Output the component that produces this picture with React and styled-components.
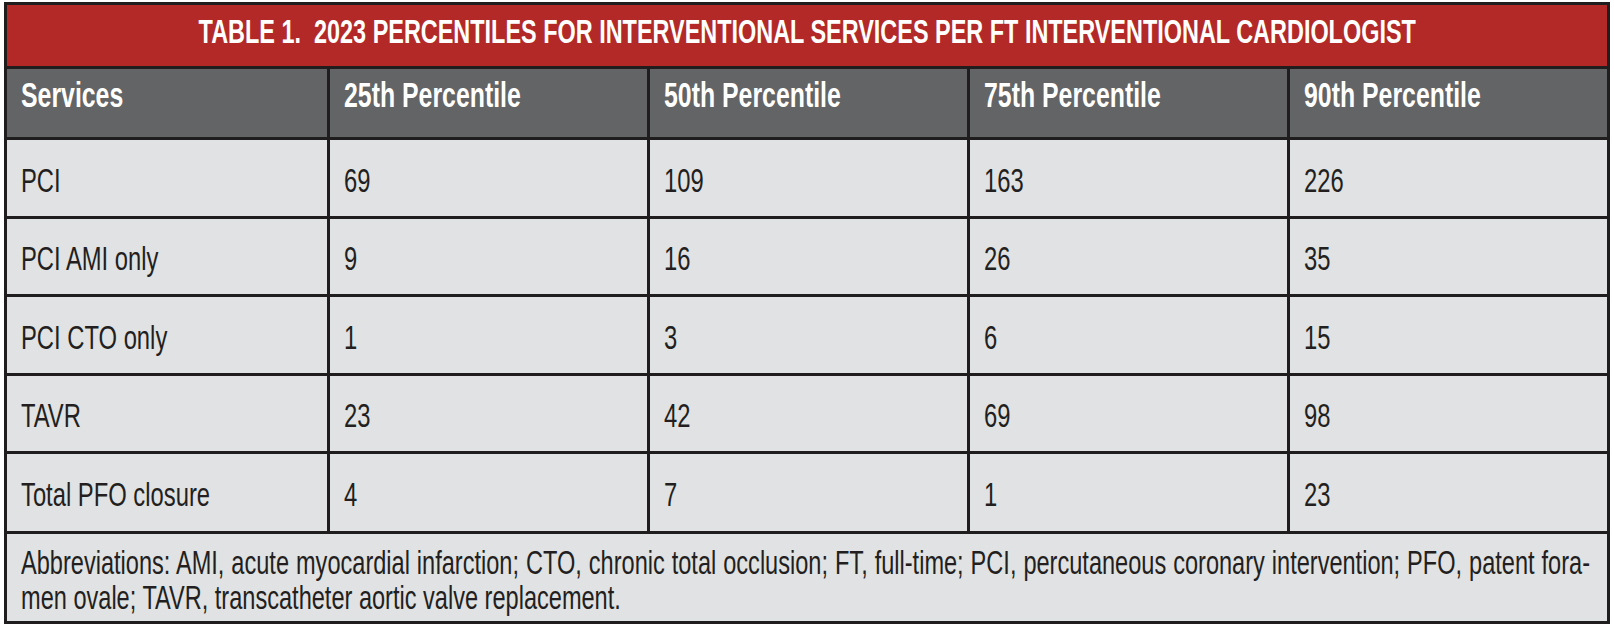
import React from "react";
import styled, { createGlobalStyle } from "styled-components";

const GlobalStyle = createGlobalStyle`
  html, body {
    margin: 0;
    padding: 0;
    background: #ffffff;
  }
  body {
    padding: 2px 4px 0 4px;
    font-family: "Liberation Sans", Arial, sans-serif;
  }
`;

const columns = [
  "Services",
  "25th Percentile",
  "50th Percentile",
  "75th Percentile",
  "90th Percentile",
];

const rows = [
  { h: 79, cells: ["PCI", "69", "109", "163", "226"] },
  { h: 78, cells: ["PCI AMI only", "9", "16", "26", "35"] },
  { h: 79, cells: ["PCI CTO only", "1", "3", "6", "15"] },
  { h: 78, cells: ["TAVR", "23", "42", "69", "98"] },
  { h: 80, cells: ["Total PFO closure", "4", "7", "1", "23"] },
];

// the reference uses a condensed grotesque; squeeze the regular face horizontally
const NARROW = 0.71;

function App() {
  return (
    <>
      <GlobalStyle />
      <Table>
        <Title>
          <Narrow $origin="center">
            TABLE 1.&nbsp; 2023 PERCENTILES FOR INTERVENTIONAL SERVICES PER FT INTERVENTIONAL CARDIOLOGIST
          </Narrow>
        </Title>
        <Grid>
          {columns.map((c, i) => (
            <HeadCell key={c} $first={i === 0}>
              <Narrow>{c}</Narrow>
            </HeadCell>
          ))}
          {rows.map((r) =>
            r.cells.map((v, i) => (
              <Cell key={r.cells[0] + i} $first={i === 0} $h={r.h}>
                <Narrow>{v}</Narrow>
              </Cell>
            ))
          )}
        </Grid>
        <Footer>
          <FooterText>
            <FirstLine>
              Abbreviations: AMI, acute myocardial infarction; CTO, chronic total occlusion; FT, full-time; PCI, percutaneous coronary intervention; PFO, patent fora-
            </FirstLine>
            <Line>men ovale; TAVR, transcatheter aortic valve replacement.</Line>
          </FooterText>
        </Footer>
      </Table>
    </>
  );
}

const Narrow = styled.span`
  display: inline-block;
  white-space: nowrap;
  transform: scaleX(${NARROW});
  transform-origin: ${(p) => p.$origin || "left"} center;
`;

const Table = styled.div`
  border: 3px solid #1f1d1e;
  background: #e1e2e3;
  color: #231f20;
  overflow: hidden;
`;

const Title = styled.div`
  height: 61px;
  background: #b22927;
  color: #ffffff;
  font-weight: bold;
  font-size: 33px;
  display: flex;
  align-items: center;
  justify-content: center;
  padding-bottom: 7px;
  box-sizing: border-box;
  overflow: hidden;
`;

const Grid = styled.div`
  display: grid;
  grid-template-columns: repeat(5, 1fr);
`;

const HeadCell = styled.div`
  height: 71px;
  box-sizing: border-box;
  border-top: 3px solid #1f1d1e;
  border-left: ${(p) => (p.$first ? "none" : "3px solid #1f1d1e")};
  background: #636466;
  color: #ffffff;
  font-weight: bold;
  font-size: 35px;
  display: flex;
  align-items: center;
  padding: 0 0 16px 14px;
  overflow: hidden;
`;

const Cell = styled.div`
  height: ${(p) => p.$h}px;
  box-sizing: border-box;
  border-top: 3px solid #1f1d1e;
  border-left: ${(p) => (p.$first ? "none" : "3px solid #1f1d1e")};
  font-size: 33.5px;
  display: flex;
  align-items: center;
  padding: 5px 0 0 14px;
  overflow: hidden;
`;

const Footer = styled.div`
  height: 90px;
  box-sizing: border-box;
  border-top: 3px solid #1f1d1e;
  padding: 11px 17px 0 14px;
  overflow: hidden;
`;

const FooterText = styled.div`
  width: ${100 / NARROW}%;
  transform: scaleX(${NARROW});
  transform-origin: left top;
  font-size: 33.2px;
  line-height: 35px;
`;

const Line = styled.div`
  white-space: nowrap;
`;

const FirstLine = styled.div`
  white-space: nowrap;
  text-align: justify;
  text-align-last: justify;
`;

export default App;
